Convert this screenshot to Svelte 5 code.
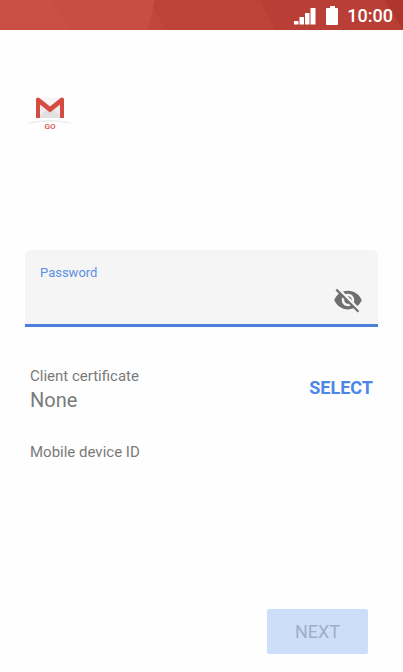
<script>
  let password = $state('');
  let visible = $state(false);
  let certificate = $state('None');
</script>

<div class="screen">
  <header class="status">
    <svg class="pattern" viewBox="0 0 403 30" preserveAspectRatio="none" aria-hidden="true">
      <path d="M0 0H155L153 12L147 30H0z" fill="#ca5046" />
      <path d="M52 0H155L153 12L147 30H70z" fill="#c84e44" />
      <path d="M155 0H260L275 30H166L153 8z" fill="#bd4339" />
      <path d="M153 8L166 30H147z" fill="#c1473d" />
      <path d="M260 0H403V30H275z" fill="#b93e35" />
      <path d="M385 0H403V30z" fill="#ae362e" />
    </svg>
    <svg class="signal" width="22" height="17" viewBox="0 0 22 17" aria-hidden="true">
      <path d="M0 13h4.500v3.500H0zM5.500 9h4.500v7.500H5.500zM11 5h4.500v11.500H11zM16.500 0h5v16.500h-5z" />
    </svg>
    <svg class="battery" width="12" height="19" viewBox="0 0 12 19" aria-hidden="true">
      <path d="M4 0h5v2h2q1 0 1 1v15q0 1-1 1H1q-1 0-1-1V3q0-1 1-1h3z" />
    </svg>
    <time>10:00</time>
  </header>

  <main>
    <svg class="logo" width="42" height="36" viewBox="0 0 42 36" role="img" aria-label="Gmail Go">
      <path d="M8 3h26v20H8z" fill="#ececec" />
      <path d="M9 23l10-10 2 2 2-2 10 10z" fill="#e0e0e0" />
      <path d="M9 3h24L21 12z" fill="#f5f5f5" />
      <path d="M7 4.500q0-2 2-2 1 0 2 1l10 8 10-8q1-1 2-1 2 0 2 2v18.500h-4V9.500l-10 8-10-8v13.500H7z" fill="#d64b40" />
      <path d="M0 27.500q21-5 42 0v1q-21-4-42 0z" fill="#ebebeb" />
      <text x="21" y="34" text-anchor="middle">GO</text>
    </svg>

    <div class="field">
      <label for="password">Password</label>
      <div class="entry">
        <input id="password" type={visible ? 'text' : 'password'} bind:value={password} />
        <button class="toggle" type="button" aria-label="Show password" onclick={() => (visible = !visible)}>
          <svg width="30" height="30" viewBox="0 0 24 24" aria-hidden="true">
            <path d="M12 7c2.76 0 5 2.24 5 5 0 .65-.13 1.26-.36 1.83l2.92 2.92c1.51-1.26 2.7-2.89 3.43-4.75-1.73-4.39-6-7.5-11-7.5-1.4 0-2.74.25-3.98.7l2.16 2.16C10.74 7.13 11.35 7 12 7zM2 4.27l2.28 2.28.46.46C3.08 8.3 1.78 10.02 1 12c1.73 4.39 6 7.5 11 7.5 1.55 0 3.03-.3 4.38-.84l.42.42L19.73 22 21 20.73 3.27 3 2 4.27zM7.53 9.8l1.55 1.55c-.05.21-.08.43-.08.65 0 1.66 1.34 3 3 3 .22 0 .44-.03.65-.08l1.55 1.55c-.67.33-1.41.53-2.2.53-2.76 0-5-2.24-5-5 0-.79.2-1.53.53-2.2zm4.31-.78l3.15 3.15.02-.16c0-1.66-1.34-3-3-3l-.17.01z" />
          </svg>
        </button>
      </div>
    </div>

    <section class="certificate">
      <div>
        <p class="caption">Client certificate</p>
        <p class="value">{certificate}</p>
      </div>
      <button class="select" type="button">SELECT</button>
    </section>

    <p class="caption device">Mobile device ID</p>
  </main>

  <footer>
    <button class="next" type="button" disabled={!password}>NEXT</button>
  </footer>
</div>

<style>
  :global(body) {
    margin: 0;
    background: #fefefe;
  }

  .screen {
    min-height: 100vh;
    display: flex;
    flex-direction: column;
    font-family: Roboto, sans-serif;
    color: #7a7a7a;
  }

  button {
    font-family: inherit;
    border: 0;
    padding: 0;
    background: none;
    cursor: pointer;
  }

  p {
    margin: 0;
  }

  .status {
    position: relative;
    height: 30px;
    display: flex;
    align-items: center;
    justify-content: flex-end;
    padding-right: 10px;
    background: #bd4339;
    color: #fff;
    fill: #fff;
  }

  .pattern {
    position: absolute;
    inset: 0;
    width: 100%;
    height: 100%;
  }

  .signal,
  .battery,
  time {
    position: relative;
  }

  .signal {
    margin-top: 2px;
  }

  .battery {
    margin: 0 9px 0 10px;
  }

  time {
    font-size: 18px;
    line-height: 30px;
    font-weight: 500;
    padding-top: 1px;
  }

  main {
    flex: 1;
    padding: 65px 25px 0;
  }

  .logo {
    display: block;
    margin-left: 4px;
  }

  .logo text {
    font-size: 8px;
    font-weight: 500;
    fill: #d64b40;
  }

  .field {
    margin-top: 119px;
    padding: 14px 15px 6px;
    background: #f5f5f5;
    border-bottom: 3px solid #4a80dc;
    border-radius: 5px 5px 0 0;
  }

  .field label {
    display: block;
    font-size: 13px;
    line-height: 18px;
    color: #5b8fe3;
  }

  .entry {
    display: flex;
    align-items: center;
    height: 36px;
  }

  .entry input {
    flex: 1;
    min-width: 0;
    padding: 0;
    border: 0;
    outline: 0;
    background: none;
    font: inherit;
    font-size: 18px;
    color: #424242;
  }

  .toggle {
    height: 30px;
    fill: #6f6f6f;
  }

  .certificate {
    display: flex;
    align-items: center;
    justify-content: space-between;
    margin-top: 37px;
    padding: 0 5px;
  }

  .caption {
    font-size: 15px;
    line-height: 24px;
  }

  .value {
    font-size: 20px;
    line-height: 24px;
  }

  .select {
    font-size: 18px;
    line-height: 24px;
    font-weight: 700;
    color: #4c86e8;
  }

  .device {
    margin-top: 28px;
    padding: 0 5px;
  }

  footer {
    display: flex;
    justify-content: flex-end;
    padding: 0 35px 18px;
  }

  .next {
    min-width: 101px;
    height: 45px;
    border-radius: 2px;
    background: #4c86e8;
    color: #fff;
    font-size: 18px;
  }

  .next:disabled {
    background: #cddefb;
    color: #a0adc6;
    cursor: default;
  }
</style>
